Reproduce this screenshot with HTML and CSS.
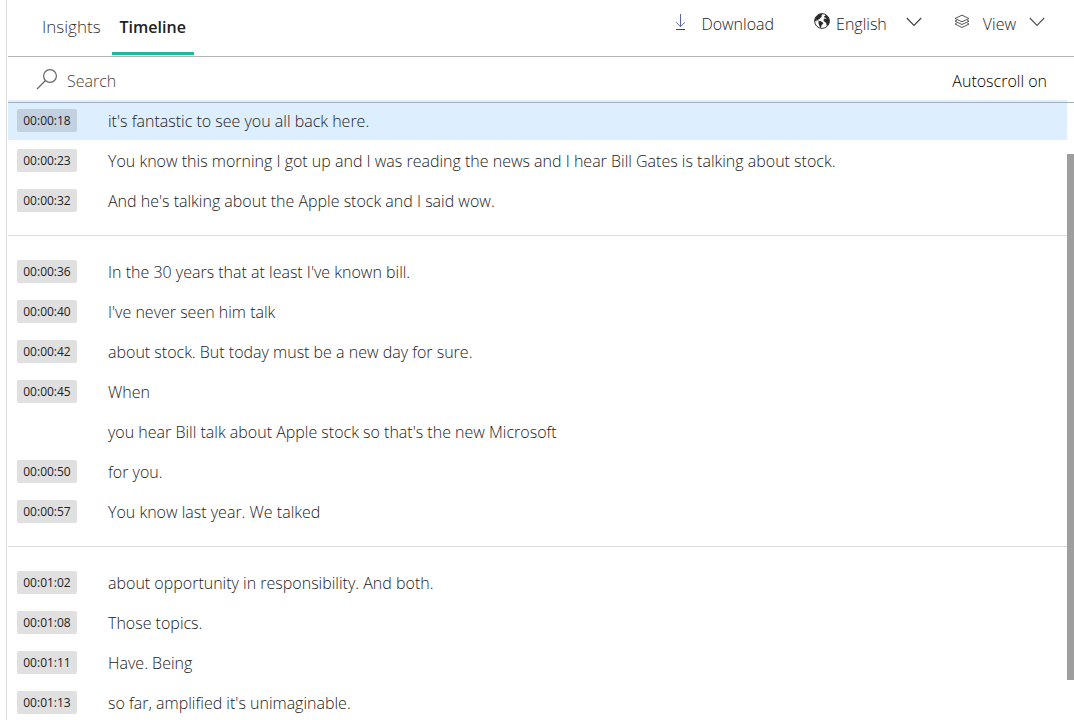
FILE: index.html
```html
<!DOCTYPE html>
<html lang="en">
<head>
<meta charset="utf-8">
<title>Timeline</title>
<link rel="stylesheet" href="styles.css">
</head>
<body>
<main class="panel">
  <header class="header">
    <nav class="tabs">
      <a class="tab" href="#insights">Insights</a>
      <a class="tab tab-active" href="#timeline" aria-current="page">Timeline</a>
    </nav>
    <div class="actions">
      <button class="action download" type="button">
        <svg class="icon-download" viewBox="0 0 12 18" width="12" height="18" fill="none"><path d="M6.500 1v12.500M2 9.200l4.500 4.500L11 9.200" stroke="#5a62a0"/><path d="M2 16.500h9" stroke="#444"/></svg>
        <span>Download</span>
      </button>
      <button class="action language" type="button">
        <svg class="icon-globe" viewBox="0 0 16 16" width="16" height="16"><circle cx="8" cy="8" r="7.400" fill="#fff" stroke="#333" stroke-width="1"/><path fill="#2b2b2b" d="M1 6 2.300 3.400 5 1.300 7.600.7 8.600 2 7.300 2.500 7.800 3.800 6.500 4.700 5.800 6 4.300 6.300 4.700 7.600 3.500 7.400 2.500 6.500 2.700 8.300 1 8ZM4.500 8.300 6.500 8 8.800 9.500 9.300 10.700 7.700 12 7.200 14 6.200 15 5.300 12.500 4.500 10.500ZM10 3.500 11.500 2.500 11 1.300 13.500 3 15.200 6.200 15.300 9.500 14 12.200 12.600 12.800 12.300 10.500 11.200 9 9.700 8.200 9.500 6.500 10.800 5.500 12.400 6 12 4.700 10.600 4.700Z"/></svg>
        <span>English</span>
        <svg class="chevron" viewBox="0 0 16 10" width="16" height="10" fill="none" stroke="#444" stroke-width="1.200"><path d="m.8 1 7.200 7.500L15.200 1"/></svg>
      </button>
      <button class="action view" type="button">
        <svg class="icon-layers" viewBox="0 0 16 16" width="16" height="16" fill="none" stroke="#555" stroke-width="1"><path d="m8 1.200 7 3.300-7 3.300-7-3.300ZM2.800 6.200 1 7.200l7 3.300 7-3.300-1.800-1M2.800 9 1 10l7 3.500 7-3.500-1.800-1"/></svg>
        <span>View</span>
        <svg class="chevron" viewBox="0 0 16 10" width="16" height="10" fill="none" stroke="#555" stroke-width="1.200"><path d="m.8 1 7.200 7.500L15.200 1"/></svg>
      </button>
    </div>
  </header>
  <div class="toolbar">
    <label class="search">
      <svg viewBox="0 0 22 22" width="22" height="22" fill="none" stroke="#666" stroke-width="1.200"><circle cx="14" cy="7" r="6.400"/><path d="M9.500 11.500 1 20"/></svg>
      <input class="search-input" type="text" placeholder="Search" aria-label="Search">
    </label>
    <button class="autoscroll" type="button">Autoscroll on</button>
  </div>
  <div class="body">
    <div class="transcript">
      <section class="group">
        <div class="line line-active"><time class="stamp">00:00:18</time><p class="text">it's fantastic to see you all back here.</p></div>
        <div class="line"><time class="stamp">00:00:23</time><p class="text">You know this morning I got up and I was reading the news and I hear Bill Gates is talking about stock.</p></div>
        <div class="line"><time class="stamp">00:00:32</time><p class="text">And he's talking about the Apple stock and I said wow.</p></div>
      </section>
      <section class="group">
        <div class="line"><time class="stamp">00:00:36</time><p class="text">In the 30 years that at least I've known bill.</p></div>
        <div class="line"><time class="stamp">00:00:40</time><p class="text">I've never seen him talk</p></div>
        <div class="line"><time class="stamp">00:00:42</time><p class="text">about stock. But today must be a new day for sure.</p></div>
        <div class="line"><time class="stamp">00:00:45</time><p class="text">When</p></div>
        <div class="line"><p class="text">you hear Bill talk about Apple stock so that's the new Microsoft</p></div>
        <div class="line"><time class="stamp">00:00:50</time><p class="text">for you.</p></div>
        <div class="line"><time class="stamp">00:00:57</time><p class="text">You know last year. We talked</p></div>
      </section>
      <section class="group">
        <div class="line"><time class="stamp">00:01:02</time><p class="text">about opportunity in responsibility. And both.</p></div>
        <div class="line"><time class="stamp">00:01:08</time><p class="text">Those topics.</p></div>
        <div class="line"><time class="stamp">00:01:11</time><p class="text">Have. Being</p></div>
        <div class="line"><time class="stamp">00:01:13</time><p class="text">so far, amplified it's unimaginable.</p></div>
      </section>
    </div>
    <div class="scrollbar"><div class="thumb"></div></div>
  </div>
</main>
</body>
</html>
```
FILE: styles.css
```css
* { box-sizing: border-box; }

body {
  margin: 0;
  background: #fff;
  color: #222;
  font: 300 16px/20px "Open Sans", "Noto Sans", sans-serif;
}

button {
  padding: 0;
  border: 0;
  background: none;
  color: inherit;
  font: inherit;
}

.panel {
  display: flex;
  flex-direction: column;
  height: 100vh;
  margin-left: 6px;
  padding-left: 1px;
  border-left: 1px solid #dcdcdc;
  overflow: hidden;
}

.header {
  display: flex;
  flex: none;
  justify-content: space-between;
  height: 57px;
  border-bottom: 1px solid #b4b4b4;
}

.tabs {
  display: flex;
  gap: 3px;
  padding-left: 26px;
}

.tab {
  height: 55px;
  padding: 16px 8px 0;
  border-bottom: 3px solid transparent;
  color: #333;
  font-size: 17px;
  line-height: 22px;
  text-decoration: none;
}

.tab-active {
  border-bottom-color: #1abc9c;
  color: #222;
  font-size: 16px;
  font-weight: 600;
}

.actions {
  display: flex;
  align-items: center;
  height: 46px;
  padding-right: 29px;
}

.action {
  display: flex;
  align-items: center;
}

.action span { padding-top: 2px; }

.download { gap: 15px; margin-right: 40px; }
.language { gap: 6px; margin-right: 32px; }
.language .chevron { margin-left: 13px; }
.view { gap: 13px; }

.icon-globe { margin-bottom: 4px; }
.icon-layers { margin-bottom: 2px; }
.icon-download { margin-bottom: 2px; }
.chevron { margin-bottom: 2px; }

.toolbar {
  position: relative;
  z-index: 1;
  display: flex;
  flex: none;
  align-items: center;
  justify-content: space-between;
  height: 46px;
  padding: 0 27px 0 28px;
  border-bottom: 1px solid #a3b0bd;
}

.search {
  display: flex;
  align-items: center;
  gap: 9px;
}

.search-input {
  width: 240px;
  padding: 2px 0 0;
  border: 0;
  outline: 0;
  background: none;
  color: #333;
  font: inherit;
}

.search-input::placeholder { color: #444; opacity: 1; }

.autoscroll {
  padding-top: 2px;
  color: #000;
}

.body {
  display: flex;
  flex: 1;
  min-height: 0;
  margin-top: -3px;
}

.transcript {
  flex: 1;
  overflow: hidden;
}

.group + .group {
  margin-top: 15px;
  padding-top: 15px;
  border-top: 1px solid #dcdcdc;
}

.line {
  display: grid;
  grid-template-columns: 60px 1fr;
  column-gap: 31px;
  align-items: center;
  height: 40px;
  padding-left: 9px;
}

.line-active { background: #def; }

.stamp {
  border-radius: 2px;
  background: #e0e0e0;
  color: #222;
  font-size: 12px;
  font-weight: 400;
  line-height: 23px;
  text-align: center;
}

.line-active .stamp { background: #c2d0df; }

.text {
  grid-column: 2;
  margin: 0;
  padding-top: 2px;
}

.scrollbar {
  width: 7px;
  padding: 54px 0 40px;
}

.thumb {
  height: 100%;
  background: #9e9e9e;
}
```
